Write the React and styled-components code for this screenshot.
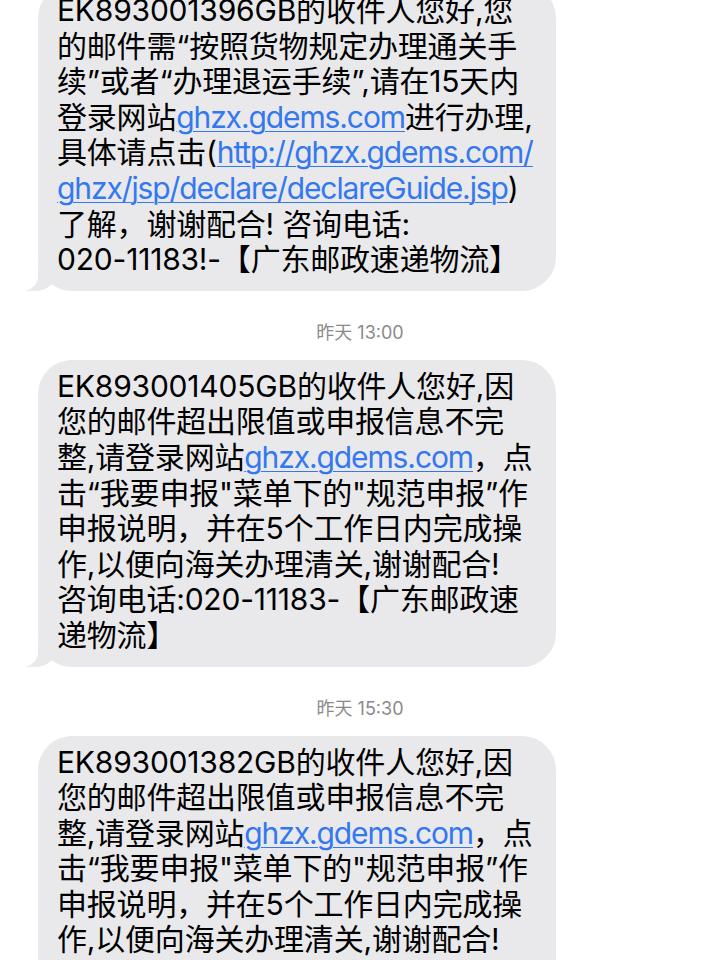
import React from 'react';
import styled, { createGlobalStyle } from 'styled-components';

const GlobalStyle = createGlobalStyle`
  html, body {
    margin: 0;
    padding: 0;
    background: #ffffff;
  }
  body {
    font-family: "Inter", "Noto Sans CJK SC", sans-serif;
    -webkit-font-smoothing: antialiased;
  }
`;

const Thread = styled.div`
  display: flex;
  flex-direction: column;
  margin-top: -16px;
  padding-left: 38px;
  height: 976px;
  overflow: hidden;
`;

const Bubble = styled.div`
  position: relative;
  box-sizing: border-box;
  width: 518px;
  padding: 9px 19px 13px 19px;
  background: #e9e9eb;
  border-radius: 34px;
  color: #000000;
  font-size: 30px;
  line-height: 35.6px;
  white-space: nowrap;
  letter-spacing: -0.2px;

  &::before {
    content: "";
    position: absolute;
    left: -12px;
    bottom: 0;
    width: 32px;
    height: 28px;
    background: #e9e9eb;
    border-bottom-right-radius: 22px;
  }

  &::after {
    content: "";
    position: absolute;
    left: -26px;
    bottom: 0;
    width: 26px;
    height: 30px;
    background: #ffffff;
    border-bottom-right-radius: 15px;
  }
`;

const Line = styled.div`
  position: relative;
  z-index: 1;
`;

const Link = styled.a`
  color: #3478f0;
  letter-spacing: -1.1px;
  text-decoration: underline;
  text-decoration-thickness: 1px;
  text-underline-offset: 3px;
`;

const Stamp = styled.div`
  margin: 31px 0 16px -38px;
  text-align: center;
  font-size: 18px;
  line-height: 22px;
  color: #8a8a8d;
`;

const notice = (id) => [
  <>{id}的收件人您好,因</>,
  <>您的邮件超出限值或申报信息不完</>,
  <>整,请登录网站<Link>ghzx.gdems.com</Link>，点</>,
  <>击“我要申报"菜单下的"规范申报”作</>,
  <>申报说明，并在5个工作日内完成操</>,
  <>作,以便向海关办理清关,谢谢配合!</>,
  <>咨询电话:020-11183-【广东邮政速</>,
  <>递物流】</>,
];

const messages = [
  {
    lines: [
      <>EK893001396GB的收件人您好,您</>,
      <>的邮件需“按照货物规定办理通关手</>,
      <>续”或者“办理退运手续”,请在15天内</>,
      <>登录网站<Link>ghzx.gdems.com</Link>进行办理,</>,
      <>具体请点击(<Link>http://ghzx.gdems.com/</Link></>,
      <><Link>ghzx/jsp/declare/declareGuide.jsp</Link>)</>,
      <>了解，谢谢配合! 咨询电话:</>,
      <>020-11183!-【广东邮政速递物流】</>,
    ],
  },
  { stamp: '昨天 13:00', lines: notice('EK893001405GB') },
  { stamp: '昨天 15:30', lines: notice('EK893001382GB') },
];

const App = () => {
  return (
    <>
      <GlobalStyle />
      <Thread>
        {messages.map((m, i) => (
          <React.Fragment key={i}>
            {m.stamp && <Stamp>{m.stamp}</Stamp>}
            <Bubble>
              {m.lines.map((l, j) => (
                <Line key={j}>{l}</Line>
              ))}
            </Bubble>
          </React.Fragment>
        ))}
      </Thread>
    </>
  );
};

export default App;
